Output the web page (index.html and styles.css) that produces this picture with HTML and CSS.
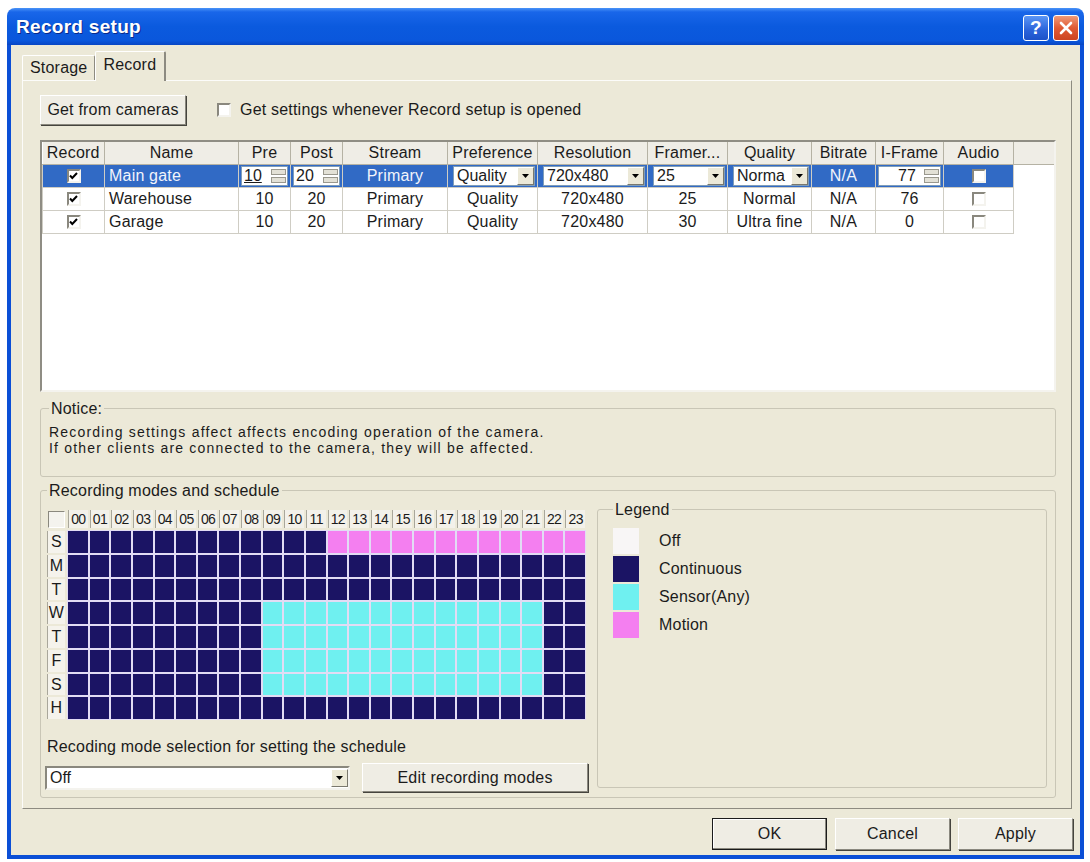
FILE: index.html
```html
<!DOCTYPE html>
<html>
<head>
    <meta charset="utf-8">
    <title>Record setup</title>
    <link rel="stylesheet" href="styles.css">
</head>
<body>

<div class="window">
    <div class="titlebar">
        <span class="title">Record setup</span>
        <div class="caption-btns">
            <span class="cap-btn help">?</span>
            <span class="cap-btn close">
                <svg width="16" height="16" viewBox="0 0 16 16"><path d="M3 3 L13 13 M13 3 L3 13" stroke="#fff" stroke-width="2.6" stroke-linecap="round"/></svg>
            </span>
        </div>
    </div>

    <div class="client">
        <div class="tabs">
            <span class="tab">Storage</span>
            <span class="tab active">Record</span>
        </div>

        <div class="panel">
            <div class="toolbar">
                <button class="btn get-btn">Get from cameras</button>
                <label class="check-label"><span class="chk"></span>Get settings whenever Record setup is opened</label>
            </div>

            <!-- camera list -->
            <div class="listview">
                <table class="cams">
                    <colgroup>
                        <col style="width:62px"><col style="width:134px"><col style="width:52px"><col style="width:52px">
                        <col style="width:105px"><col style="width:90px"><col style="width:110px"><col style="width:80px">
                        <col style="width:84px"><col style="width:64px"><col style="width:68px"><col style="width:70px">
                        <col>
                    </colgroup>
                    <thead>
                        <tr>
                            <th>Record</th><th>Name</th><th>Pre</th><th>Post</th><th>Stream</th><th>Preference</th>
                            <th>Resolution</th><th>Framer...</th><th>Quality</th><th>Bitrate</th><th>I-Frame</th><th>Audio</th>
                            <th class="filler"></th>
                        </tr>
                    </thead>
                    <tbody>
                        <tr class="selected">
                            <td><span class="chk on"><svg width="9" height="8" viewBox="0 0 9 8"><path d="M1 3.5 L3.3 6 L8 1" fill="none" stroke="#000" stroke-width="2"/></svg></span></td>
                            <td class="name">Main gate</td>
                            <td class="ed"><span class="spin"><span class="spin-val sel">10</span><span class="spin-btns"><i></i><i></i></span></span></td>
                            <td class="ed"><span class="spin"><span class="spin-val">20</span><span class="spin-btns"><i></i><i></i></span></span></td>
                            <td>Primary</td>
                            <td class="ed"><span class="combo"><span class="combo-val">Quality</span><span class="drop"><svg width="7" height="4" viewBox="0 0 7 4"><path d="M0 0 H7 L3.5 4 Z"/></svg></span></span></td>
                            <td class="ed"><span class="combo"><span class="combo-val">720x480</span><span class="drop"><svg width="7" height="4" viewBox="0 0 7 4"><path d="M0 0 H7 L3.5 4 Z"/></svg></span></span></td>
                            <td class="ed"><span class="combo"><span class="combo-val">25</span><span class="drop"><svg width="7" height="4" viewBox="0 0 7 4"><path d="M0 0 H7 L3.5 4 Z"/></svg></span></span></td>
                            <td class="ed"><span class="combo"><span class="combo-val">Norma</span><span class="drop"><svg width="7" height="4" viewBox="0 0 7 4"><path d="M0 0 H7 L3.5 4 Z"/></svg></span></span></td>
                            <td>N/A</td>
                            <td class="ed"><span class="spin wide"><span class="spin-val">77</span><span class="spin-btns"><i></i><i></i></span></span></td>
                            <td><span class="chk"></span></td>
                            <td class="filler"></td>
                        </tr>
                        <tr>
                            <td><span class="chk on"><svg width="9" height="8" viewBox="0 0 9 8"><path d="M1 3.5 L3.3 6 L8 1" fill="none" stroke="#000" stroke-width="2"/></svg></span></td>
                            <td class="name">Warehouse</td>
                            <td>10</td><td>20</td><td>Primary</td><td>Quality</td><td>720x480</td><td>25</td><td>Normal</td><td>N/A</td><td>76</td>
                            <td><span class="chk"></span></td>
                            <td class="filler"></td>
                        </tr>
                        <tr>
                            <td><span class="chk on"><svg width="9" height="8" viewBox="0 0 9 8"><path d="M1 3.5 L3.3 6 L8 1" fill="none" stroke="#000" stroke-width="2"/></svg></span></td>
                            <td class="name">Garage</td>
                            <td>10</td><td>20</td><td>Primary</td><td>Quality</td><td>720x480</td><td>30</td><td>Ultra fine</td><td>N/A</td><td>0</td>
                            <td><span class="chk"></span></td>
                            <td class="filler"></td>
                        </tr>
                    </tbody>
                </table>
            </div>

            <fieldset class="group notice">
                <legend>Notice:</legend>
                <p>Recording settings affect affects encoding operation of the camera.<br>
                If other clients are connected to the camera, they will be affected.</p>
            </fieldset>

            <fieldset class="group modes">
                <legend>Recording modes and schedule</legend>
                <div class="modes-body">
                    <div class="sched-col">
                        <div class="sched">
                            <div class="corner"></div>
                            <div class="hours" id="hours"></div>
                            <div class="days" id="days"></div>
                            <div class="cells" id="cells"></div>
                        </div>
                        <div class="mode-label">Recoding mode selection for setting the schedule</div>
                        <div class="mode-row">
                            <span class="combo big"><span class="combo-val">Off</span><span class="drop"><svg width="7" height="4" viewBox="0 0 7 4"><path d="M0 0 H7 L3.5 4 Z"/></svg></span></span>
                            <button class="btn edit-btn">Edit recording modes</button>
                        </div>
                    </div>

                    <fieldset class="group legend-box">
                        <legend>Legend</legend>
                        <div class="legend-item"><span class="swatch off"></span>Off</div>
                        <div class="legend-item"><span class="swatch cont"></span>Continuous</div>
                        <div class="legend-item"><span class="swatch sens"></span>Sensor(Any)</div>
                        <div class="legend-item"><span class="swatch mot"></span>Motion</div>
                    </fieldset>
                </div>
            </fieldset>
        </div>

        <div class="footer">
            <button class="btn dlg default">OK</button>
            <button class="btn dlg">Cancel</button>
            <button class="btn dlg">Apply</button>
        </div>
    </div>
</div>

<script>
// week schedule: c = continuous, s = sensor, m = motion
var days = ['S', 'M', 'T', 'W', 'T', 'F', 'S', 'H'];
var allCont = 'cccccccccccccccccccccccc';
var sensorDay = 'ccccccccc' + 'sssssssssssss' + 'cc';
var plan = [
    'cccccccccccc' + 'mmmmmmmmmmmm',
    allCont,
    allCont,
    sensorDay,
    sensorDay,
    sensorDay,
    sensorDay,
    allCont
];

var hours = document.getElementById('hours');
for (var h = 0; h < 24; h++) {
    var hd = document.createElement('div');
    hd.className = 'hour';
    hd.textContent = (h < 10 ? '0' : '') + h;
    hours.appendChild(hd);
}

var dayCol = document.getElementById('days');
var cells = document.getElementById('cells');
for (var d = 0; d < days.length; d++) {
    var lab = document.createElement('div');
    lab.className = 'day';
    lab.textContent = days[d];
    dayCol.appendChild(lab);
    for (var i = 0; i < 24; i++) {
        var c = document.createElement('div');
        c.className = 'cell ' + plan[d].charAt(i);
        cells.appendChild(c);
    }
}
</script>
</body>
</html>
```

FILE: styles.css
```css
* {
    box-sizing: border-box;
}

body {
    margin: 0;
    background: #fff;
    font-family: "Liberation Sans", Arial, sans-serif;
    font-size: 16px;
    letter-spacing: 0.2px;
    color: #1b1b1b;
}

/* window frame */
.window {
    margin: 8px 0 0 7px;
    width: 1077px;
    display: flex;
    flex-direction: column;
}

.titlebar {
    height: 37px;
    border-radius: 8px 8px 0 0;
    background: linear-gradient(#4a93f7 0, #1966e9 4px, #0b5ade 50%, #0a57dc 88%, #0846c4 100%);
    display: flex;
    align-items: center;
    justify-content: space-between;
    padding: 0 5px 0 9px;
}

.title {
    color: #fff;
    font-weight: bold;
    font-size: 19px;
    letter-spacing: 0.3px;
    text-shadow: 1px 1px 0 #0a2a8a;
}

.caption-btns {
    display: flex;
    gap: 4px;
    padding-top: 2px;
}

.cap-btn {
    width: 26px;
    height: 26px;
    border: 1px solid #fff;
    border-radius: 3px;
    display: flex;
    align-items: center;
    justify-content: center;
    color: #fff;
    font-weight: bold;
    font-size: 19px;
}

.cap-btn.help {
    background: linear-gradient(#5b95f5, #2a63da 60%, #1d52c8);
}

.cap-btn.close {
    background: linear-gradient(#f09a78, #e05a33 50%, #cc4421);
}

.client {
    background: #ece9d8;
    border: 4px solid #0b4fd6;
    border-top: 0;
    display: flex;
    flex-direction: column;
    padding: 0 8px 5px 11px;
}

/* tabs */
.tabs {
    height: 35px;
    display: flex;
    align-items: flex-end;
}

.tab {
    height: 25px;
    padding: 0 7px;
    line-height: 24px;
    border: 1px solid;
    border-color: #fff #8d8b81 transparent #fff;
    border-bottom: 0;
    border-radius: 2px 2px 0 0;
}

.tab.active {
    height: 30px;
    margin-bottom: -1px;
    padding: 0 8px 0 7px;
    line-height: 25px;
    background: #ece9d8;
    border-right: 2px solid #8d8b81;
    position: relative;
    z-index: 1;
}

.panel {
    height: 729px;
    border: 1px solid;
    border-color: #fcfcfa #8d8b81 #8d8b81 #fcfcfa;
    padding: 14px 15px 0 17px;
    display: flex;
    flex-direction: column;
}

/* buttons */
.btn {
    font-family: inherit;
    font-size: 16px;
    letter-spacing: 0.2px;
    color: #1b1b1b;
    background: #efede4;
    border: 1px solid;
    border-color: #fff #8a887e #8a887e #fff;
    box-shadow: 1px 1px 0 #45443e;
    padding: 0;
}

.toolbar {
    display: flex;
    align-items: center;
    gap: 31px;
}

.get-btn {
    width: 146px;
    height: 30px;
}

.check-label {
    display: flex;
    align-items: center;
    gap: 9px;
}

/* checkboxes */
.chk {
    display: inline-flex;
    align-items: center;
    justify-content: center;
    width: 14px;
    height: 14px;
    background: #fff;
    border: 2px solid;
    border-color: #8a887e #f4f3ee #f4f3ee #8a887e;
    vertical-align: middle;
}

/* list */
.listview {
    margin-top: 15px;
    height: 252px;
    background: #fff;
    border: 2px solid;
    border-color: #8f8d84 #f4f3ee #f4f3ee #8f8d84;
}

.cams {
    width: 100%;
    border-collapse: collapse;
    table-layout: fixed;
}

.cams th {
    height: 22px;
    font-weight: normal;
    background: #efede6;
    border-right: 1px solid #b5b2a4;
    border-bottom: 1px solid #b5b2a4;
    white-space: nowrap;
    overflow: hidden;
    padding: 0 2px;
}

.cams td {
    height: 23px;
    border: 1px solid #cfcdc4;
    text-align: center;
    white-space: nowrap;
    overflow: hidden;
    padding: 0 3px;
}

.cams td.name {
    text-align: left;
    padding-left: 4px;
}

.cams td.ed {
    padding: 1px 2px;
}

.cams th.filler {
    border-right: 0;
}

.cams td.filler {
    border: 0;
    background: #fff;
}

.cams tr.selected td {
    background: #316ac5;
    color: #f2f4fb;
}

.cams tr.selected td.filler {
    background: #fff;
}

/* in-cell editors */
.spin, .combo {
    display: flex;
    align-items: center;
    height: 20px;
    background: #fff;
    color: #1b1b1b;
    border: 1px solid #7f9db9;
    text-align: left;
    letter-spacing: 0;
}

.spin-val {
    flex: 1;
    padding-left: 2px;
    line-height: 18px;
}

.spin-val.sel {
    text-decoration: underline;
}

.spin.wide .spin-val {
    text-align: center;
    padding-left: 12px;
}

.spin-btns {
    width: 17px;
    height: 18px;
    display: flex;
    flex-direction: column;
    gap: 2px;
    padding: 2px 1px;
}

.spin-btns i {
    flex: 1;
    background: #e3e1d6;
    border: 1px solid #9a988d;
}

.combo {
    margin-left: 3px;
}

.combo-val {
    flex: 1;
    padding-left: 3px;
    overflow: hidden;
    white-space: nowrap;
}

.drop {
    width: 17px;
    height: 18px;
    background: #ece9d8;
    border: 1px solid;
    border-color: #fff #7a786e #7a786e #fff;
    display: flex;
    align-items: center;
    justify-content: center;
}

/* group boxes */
.group {
    margin: 0;
    min-width: 0;
    border: 1px solid #c9c6b6;
    border-radius: 3px;
}

.group legend {
    padding: 0 2px;
    line-height: 17px;
}

.notice {
    margin-top: 8px;
    height: 77px;
    padding: 7px 8px 0 8px;
}

.notice p {
    margin: 0;
    font-size: 14px;
    letter-spacing: 1.2px;
    line-height: 16px;
}

.modes {
    margin-top: 5px;
    height: 316px;
    padding: 11px 8px 0 6px;
}

.modes-body {
    display: flex;
    gap: 9px;
}

.sched-col {
    width: 541px;
    display: flex;
    flex-direction: column;
}

/* schedule grid */
.sched {
    width: 539px;
    display: grid;
    grid-template-columns: 20px 519px;
    grid-template-rows: 20px 190px;
}

.corner {
    margin: 1px 2px 2px 1px;
    background: #f4f3ee;
    border: 1px solid;
    border-color: #8a887e #fff #fff #8a887e;
}

.hours {
    display: grid;
    grid-template-columns: repeat(24, 1fr);
    column-gap: 2px;
    padding: 0 1px 2px;
}

.hour {
    font-size: 14px;
    letter-spacing: -0.6px;
    line-height: 18px;
    text-align: center;
    background: #f3f1ea;
    border-left: 1px solid #a9a79b;
}

.days {
    display: grid;
    grid-template-rows: repeat(8, 1fr);
    row-gap: 2px;
    padding: 1px 2px 1px 0;
}

.day {
    text-align: center;
    line-height: 21px;
    background: #f5f3ec;
    border-left: 1px solid #a9a79b;
}

.cells {
    display: grid;
    grid-template-columns: repeat(24, 1fr);
    grid-template-rows: repeat(8, 1fr);
    gap: 2px;
    padding: 1px;
    background: #e2dcf4;
}

.cell.c { background: #1b1464; }
.cell.s { background: #6ff0f0; }
.cell.m { background: #f47ff0; }

.mode-label {
    margin-top: 18px;
    line-height: 17px;
}

.mode-row {
    margin-top: 8px;
    display: flex;
    align-items: center;
    gap: 12px;
}

.combo.big {
    width: 305px;
    height: 24px;
    margin-left: -2px;
    border: 2px solid;
    border-color: #8a887e #f4f3ee #f4f3ee #8a887e;
}

.edit-btn {
    width: 226px;
    height: 29px;
}

/* legend */
.legend-box {
    flex: 1;
    height: 287px;
    margin-top: -9px;
    padding: 10px 15px 0 15px;
}

.legend-item {
    display: flex;
    align-items: center;
    gap: 20px;
    height: 26px;
    margin-bottom: 2px;
}

.swatch {
    width: 26px;
    height: 26px;
}

.swatch.off { background: #f8f6f6; }
.swatch.cont { background: #1b1464; }
.swatch.sens { background: #6ff0f0; }
.swatch.mot { background: #f47ff0; }

/* dialog buttons */
.footer {
    display: flex;
    justify-content: flex-end;
    gap: 8px;
    padding-top: 9px;
    margin-right: -1px;
}

.dlg {
    width: 115px;
    height: 32px;
}

.dlg.default {
    border: 1px solid #1b1b1b;
    box-shadow: inset -1px -1px 0 #8a887e, inset 1px 1px 0 #fff;
}
```
